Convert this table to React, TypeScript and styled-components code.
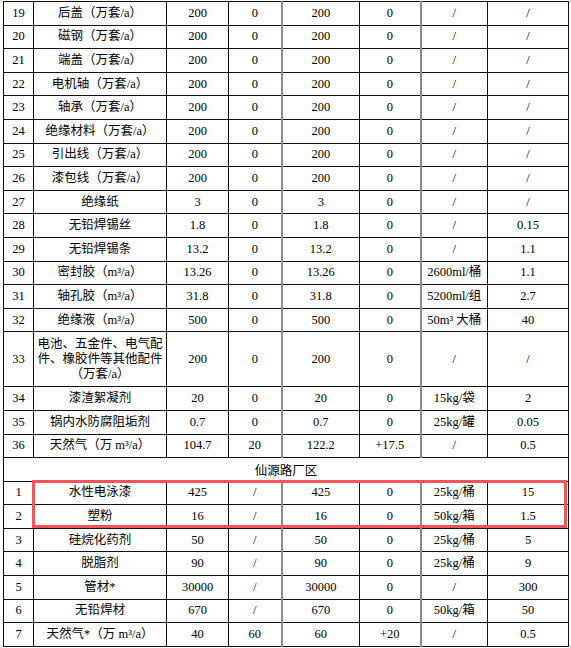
import React from "react";
import styled, { createGlobalStyle } from "styled-components";

const Global = createGlobalStyle`
  html, body { margin: 0; padding: 0; background: #fff; }
  body { font-family: "Liberation Serif", "Noto Sans CJK SC", serif; color: #000; }
`;

const Page = styled.div`
  padding: 1px 0 0 3px;
`;

const Wrap = styled.div`
  position: relative;
  width: 565px;
`;

const Table = styled.table`
  border-collapse: collapse;
  table-layout: fixed;
  width: 565px;
  font-size: 12.5px;
`;

const Row = styled.tr<{ $h?: number }>`
  height: ${(p) => p.$h ?? 23.6}px;
`;

const Cell = styled.td<{ $grey?: boolean }>`
  border: 1px solid #111;
  ${(p) => (p.$grey ? "border-left: 2px solid #8c8c8c;" : "")}
  text-align: center;
  vertical-align: middle;
  padding: 0 2px;
  line-height: 15px;
  white-space: nowrap;
`;

const WrapCell = styled(Cell)`
  white-space: normal;
`;

const Section = styled.td`
  border: 1px solid #111;
  text-align: center;
  vertical-align: middle;
  font-size: 12.5px;
`;

const Highlight = styled.div`
  position: absolute;
  left: 29px;
  top: 479px;
  width: 535px;
  height: 48px;
  box-sizing: border-box;
  border: 3px solid #f2545b;
  pointer-events: none;
`;

type R = [string, React.ReactNode, string, string, string, string, string, string];

const top: R[] = [
  ["19", "后盖（万套/a）", "200", "0", "200", "0", "/", "/"],
  ["20", "磁钢（万套/a）", "200", "0", "200", "0", "/", "/"],
  ["21", "端盖（万套/a）", "200", "0", "200", "0", "/", "/"],
  ["22", "电机轴（万套/a）", "200", "0", "200", "0", "/", "/"],
  ["23", "轴承（万套/a）", "200", "0", "200", "0", "/", "/"],
  ["24", "绝缘材料（万套/a）", "200", "0", "200", "0", "/", "/"],
  ["25", "引出线（万套/a）", "200", "0", "200", "0", "/", "/"],
  ["26", "漆包线（万套/a）", "200", "0", "200", "0", "/", "/"],
  ["27", "绝缘纸", "3", "0", "3", "0", "/", "/"],
  ["28", "无铅焊锡丝", "1.8", "0", "1.8", "0", "/", "0.15"],
  ["29", "无铅焊锡条", "13.2", "0", "13.2", "0", "/", "1.1"],
  ["30", "密封胶（m³/a）", "13.26", "0", "13.26", "0", "2600ml/桶", "1.1"],
  ["31", "轴孔胶（m³/a）", "31.8", "0", "31.8", "0", "5200ml/组", "2.7"],
  ["32", "绝缘液（m³/a）", "500", "0", "500", "0", "50m³ 大桶", "40"],
];

const mid: R[] = [
  ["34", "漆渣絮凝剂", "20", "0", "20", "0", "15kg/袋", "2"],
  ["35", "锅内水防腐阻垢剂", "0.7", "0", "0.7", "0", "25kg/罐", "0.05"],
  ["36", "天然气（万 m³/a）", "104.7", "20", "122.2", "+17.5", "/", "0.5"],
];

const bottom: R[] = [
  ["1", "水性电泳漆", "425", "/", "425", "0", "25kg/桶", "15"],
  ["2", "塑粉", "16", "/", "16", "0", "50kg/箱", "1.5"],
  ["3", "硅烷化药剂", "50", "/", "50", "0", "25kg/桶", "5"],
  ["4", "脱脂剂", "90", "/", "90", "0", "25kg/桶", "9"],
  ["5", "管材*", "30000", "/", "30000", "0", "/", "300"],
  ["6", "无铅焊材", "670", "/", "670", "0", "50kg/箱", "50"],
  ["7", "天然气*（万 m³/a）", "40", "60", "60", "+20", "/", "0.5"],
];

const widths = [30, 133, 62, 53, 78, 61, 67, 81];

const DataRow = ({ r, h }: { r: R; h?: number }) => (
  <Row $h={h}>
    {r.map((v, i) =>
      i === 1 && h ? (
        <WrapCell key={i}>{v}</WrapCell>
      ) : (
        <Cell key={i} $grey={i === 4 || i === 6}>
          {v}
        </Cell>
      )
    )}
  </Row>
);

export default function App() {
  const r33: R = [
    "33",
    <>
      电池、五金件、电气配
      <br />
      件、橡胶件等其他配件
      <br />
      （万套/a）
    </>,
    "200",
    "0",
    "200",
    "0",
    "/",
    "/",
  ];
  return (
    <>
      <Global />
      <Page>
        <Wrap>
          <Table>
            <colgroup>
              {widths.map((w, i) => (
                <col key={i} style={{ width: w }} />
              ))}
            </colgroup>
            <tbody>
              {top.map((r) => (
                <DataRow key={r[0]} r={r} />
              ))}
              <DataRow r={r33} h={55} />
              {mid.map((r) => (
                <DataRow key={r[0]} r={r} />
              ))}
              <Row>
                <Section colSpan={8}>仙源路厂区</Section>
              </Row>
              {bottom.map((r) => (
                <DataRow key={"b" + r[0]} r={r} />
              ))}
            </tbody>
          </Table>
          <Highlight />
        </Wrap>
      </Page>
    </>
  );
}
